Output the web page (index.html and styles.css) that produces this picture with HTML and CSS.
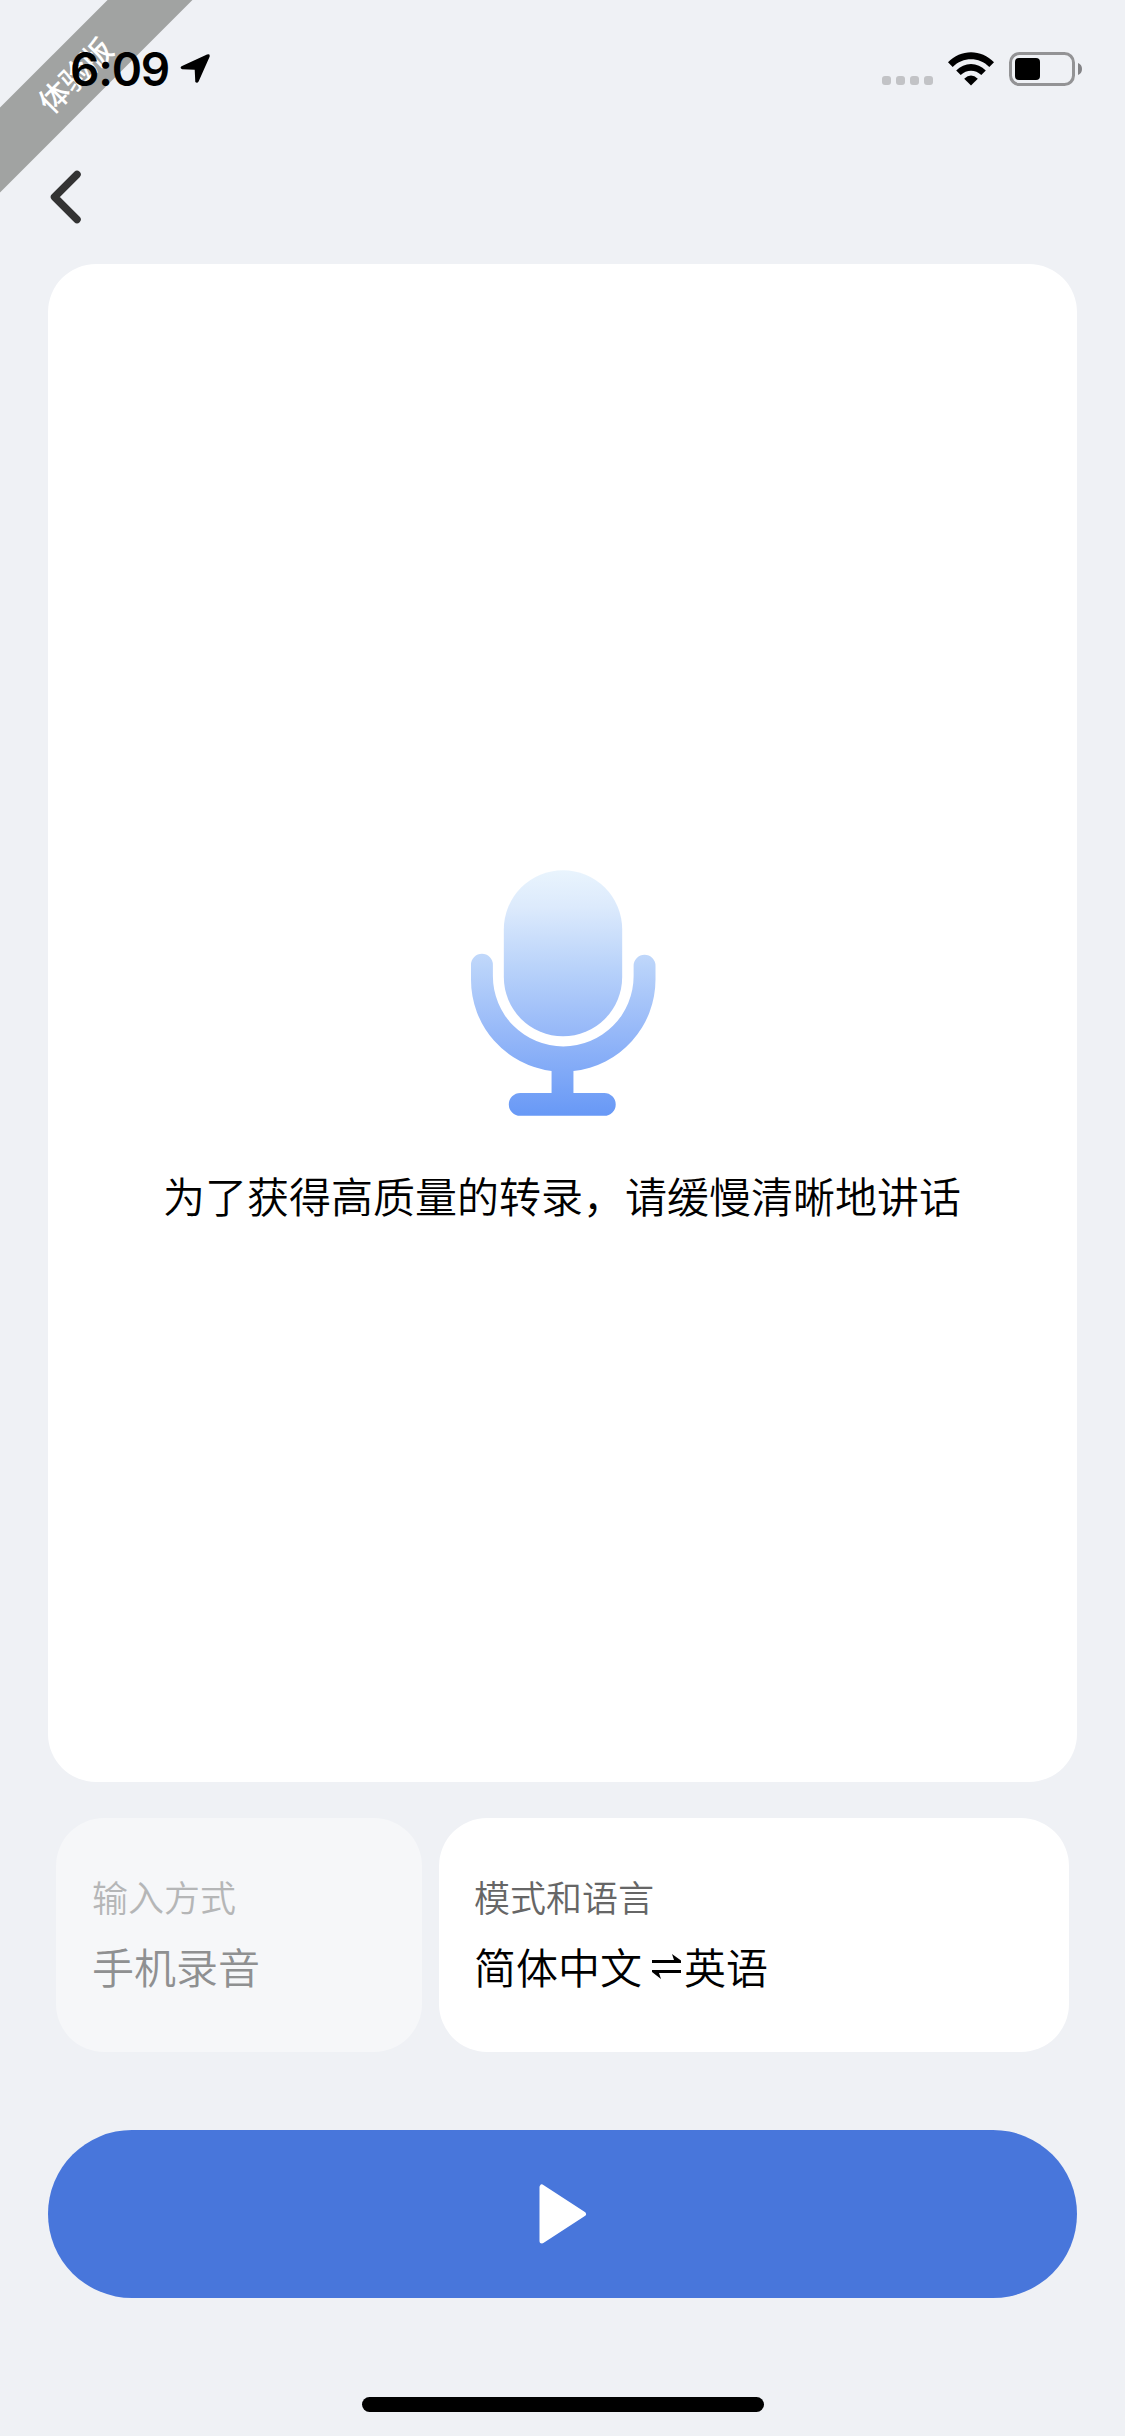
FILE: index.html
```html
<!DOCTYPE html>
<html lang="zh-CN">
<head>
<meta charset="utf-8">
<title>录音转录</title>
<link rel="stylesheet" href="styles.css">
</head>
<body>
<div class="screen">
  <div class="ribbon">体验版</div>
  <header class="status-bar">
    <span class="time">6:09</span>
    <svg class="location" viewBox="0 0 30 30"><path d="M1.5 12.200 27 .6q3.300-1 2.600 2.200L18.600 27.500q-1.400 2.400-3.300.6L14.700 15.700 2.200 15.300Q-.6 13.800 1.500 12.200Z"/></svg>
    <div class="indicators">
      <div class="signal"><i></i><i></i><i></i><i></i></div>
      <svg class="wifi" viewBox="0 0 46 34"><path d="M0 10.200C12.500-3.200 33.500-3.200 46 10.200L41.300 15C31.200 4.700 14.800 4.700 4.700 15Z"/><path d="M8.200 18.500C16.300 9.700 29.700 9.700 37.800 18.500L33.300 23C27.400 17.200 18.600 17.200 12.700 23Z"/><path d="M16.200 26.700Q23 20.300 29.800 26.700L23 33.500Z"/></svg>
      <svg class="battery" viewBox="0 0 73 34"><rect x="1.500" y="1.500" width="63" height="31" rx="9" fill="none" stroke="#939395" stroke-width="3"/><rect x="6" y="6" width="25" height="22" rx="4"/><path d="M69 11Q73 12.500 73 17T69 23Z" fill="#838386"/></svg>
    </div>
  </header>
  <nav class="nav-bar">
    <svg class="back" viewBox="0 0 32 54"><path d="M27 4.500 4.500 27 27 49.500" fill="none" stroke="#333" stroke-width="7.500" stroke-linecap="round" stroke-linejoin="round"/></svg>
  </nav>
  <main class="transcript">
    <svg class="mic" viewBox="0 0 186 248">
      <defs><linearGradient id="mic-fill" gradientUnits="userSpaceOnUse" x1="88" y1="0" x2="91" y2="248"><stop offset="0" stop-color="#e9f4fd"/><stop offset=".15" stop-color="#dceafc"/><stop offset=".4" stop-color="#b8d2fa"/><stop offset=".66" stop-color="#96b8f8"/><stop offset="1" stop-color="#6798f6"/></linearGradient></defs>
      <g fill="url(#mic-fill)">
        <rect x="33" y="0" width="119" height="167" rx="59.500"/>
        <path d="M0 95A11 11 0 0 1 22 95V106.500A70.750 70.750 0 0 0 163.500 106.500V96A11 11 0 0 1 185.500 96V110A92.500 92.500 0 0 1 103 202V224H134A11.500 11.500 0 0 1 134 247H49.500A11.500 11.500 0 0 1 49.500 224H81V202A92.500 92.500 0 0 1 0 110Z"/>
      </g>
    </svg>
    <p class="hint">为了获得高质量的转录，请缓慢清晰地讲话</p>
  </main>
  <section class="settings">
    <div class="option input-option">
      <div class="label">输入方式</div>
      <div class="value">手机录音</div>
    </div>
    <div class="option language-option">
      <div class="label">模式和语言</div>
      <div class="value">简体中文<svg class="swap" viewBox="0 0 29 25" role="img" aria-label="⇌"><path d="M0 6H22L20 0 29 6.500V9H0ZM29 19H7L9 25 0 18V16H29Z"/></svg>英语</div>
    </div>
  </section>
  <button class="start" aria-label="开始">
    <svg class="play" viewBox="0 0 48 60"><path d="M3 3V57L44.500 30Z" fill="#fff" stroke="#fff" stroke-width="5" stroke-linejoin="round"/></svg>
  </button>
  <div class="home-indicator"></div>
</div>
</body>
</html>
```
FILE: styles.css
```css
* { box-sizing: border-box; }
body { margin: 0; }
.screen {
  position: relative;
  width: 1125px;
  height: 2436px;
  display: flex;
  flex-direction: column;
  overflow: hidden;
  background: #eff1f5;
  color: #000;
  font-family: "Noto Sans CJK SC", sans-serif;
}
.ribbon {
  position: absolute;
  left: -75px;
  top: 45px;
  width: 300px;
  height: 60px;
  background: #a1a3a2;
  color: #fff;
  font-size: 30px;
  font-weight: 500;
  line-height: 59px;
  text-align: center;
  transform: rotate(-45deg);
}
.status-bar {
  position: relative;
  flex: none;
  display: flex;
  align-items: flex-start;
  height: 132px;
  padding: 0 43px 0 70px;
}
.time {
  width: 110px;
  padding-top: 40px;
  font: 600 46px/58px Inter, sans-serif;
  letter-spacing: -1.2px;
  white-space: nowrap;
}
.location { width: 30px; height: 30px; margin-top: 54px; }
.indicators { display: flex; align-items: flex-start; margin-left: auto; padding-top: 52px; }
.signal { display: flex; gap: 5px; padding-top: 24px; }
.signal i { width: 9px; height: 9px; border-radius: 3px; background: #c2c3c6; }
.wifi { width: 46px; height: 34px; margin-left: 15px; }
.battery { width: 73px; height: 34px; margin-left: 15px; }
.nav-bar { flex: none; height: 132px; padding: 38px 0 0 50px; }
.back { display: block; width: 32px; height: 54px; }
.transcript {
  flex: none;
  display: flex;
  flex-direction: column;
  align-items: center;
  height: 1518px;
  margin: 0 48px;
  padding-top: 606px;
  background: #fff;
  border-radius: 48px;
}
.mic { width: 185px; height: 247px; margin-left: 1px; }
.hint { margin: 48px 1px 0 0; font-size: 42px; font-weight: 350; line-height: 60px; white-space: nowrap; }
.settings { flex: none; display: flex; gap: 17px; height: 234px; margin: 36px 56px 0; }
.option { padding: 51px 36px 0 35px; border-radius: 48px; background: #fff; white-space: nowrap; }
.input-option { width: 366px; padding-left: 36px; background: #f6f7f9; }
.language-option { flex: 1; }
.label { color: #666; font-size: 36px; font-weight: 350; line-height: 54px; }
.value { margin-top: 10px; font-size: 42px; font-weight: 350; line-height: 66px; }
.input-option .label { color: #b5b6b7; }
.input-option .value { color: #8f9091; }
.swap { width: 29px; height: 25px; margin: 0 3px 0 10px; vertical-align: 5px; }
.start {
  flex: none;
  display: flex;
  align-items: center;
  height: 168px;
  margin: 78px 48px 0;
  padding: 0 0 0 491px;
  border: 0;
  border-radius: 84px;
  background: #4876db;
}
.play { width: 48px; height: 60px; }
.home-indicator { flex: none; width: 402px; height: 15px; margin: 99px auto 0 362px; border-radius: 8px; background: #000; }
```
